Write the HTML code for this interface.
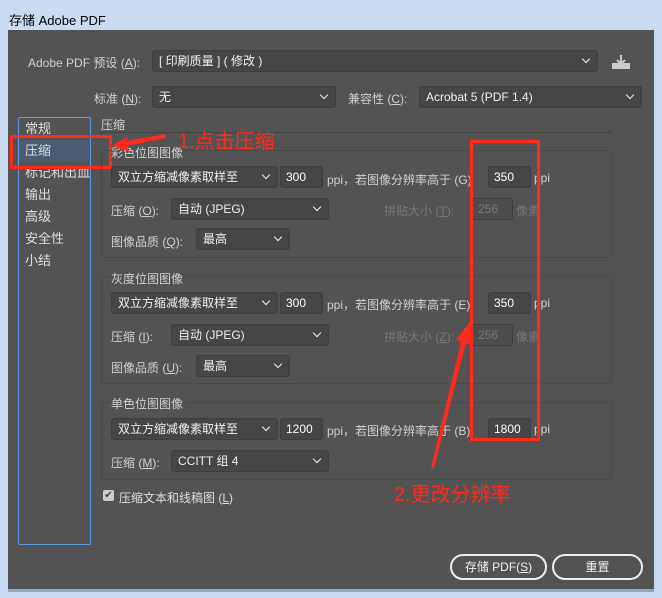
<!DOCTYPE html><html><head><meta charset="utf-8"><style>
*{margin:0;padding:0;box-sizing:border-box}
body{width:662px;height:598px;overflow:hidden;background:#c9dbf0;font-family:"Liberation Sans","Noto Sans CJK SC",sans-serif;font-size:12px;color:#dedede;position:relative}
.a{position:absolute;white-space:nowrap}
.dark{left:8px;top:30px;width:646px;height:560px;background:#535353}
.sel{position:absolute;background:#464646;border:1px solid #3e3e3e;border-radius:3px;color:#f0f0f0;padding-left:6px;line-height:20px}
.sel:after{content:"";position:absolute;right:8px;top:5px;width:5px;height:5px;border-right:1.5px solid #eee;border-bottom:1.5px solid #eee;transform:rotate(45deg)}
.inp{position:absolute;background:#464646;border:1px solid #3e3e3e;border-radius:3px;color:#fff;padding-left:5px;line-height:20px}
.grp{position:absolute;border:1px solid #4a4a4a;border-radius:3px}
.lbl{color:#d0d0d0}
.dis{color:#777}
.red{position:absolute;border:3px solid #ff2a1a}
.rt{color:#ff2a1a;font-size:20px}
.btn{position:absolute;border:2px solid #eee;border-radius:13px;text-align:center;line-height:22px;color:#eee}
</style></head><body>
<div class="a" style="left:9px;top:10px;color:#000;font-size:13px">存储 Adobe PDF</div>
<div class="a dark"></div>
<div class="a" style="left:8px;top:589px;width:646px;height:3px;background:#8ab"></div>
<div class="a lbl" style="left:28px;top:54px">Adobe PDF 预设 (<u>A</u>):</div>
<div class="sel" style="left:152px;top:50px;width:446px;height:22px">[ 印刷质量 ] ( 修改 )</div>
<svg class="a" style="left:612px;top:55px" width="18" height="14"><rect x="0" y="8" width="18" height="6" fill="#ccc"/><path d="M9 0v8M5 5l4 4 4-4" stroke="#ccc" stroke-width="2" fill="none"/></svg>
<div class="a lbl" style="left:94px;top:90px">标准 (<u>N</u>):</div>
<div class="sel" style="left:152px;top:86px;width:184px;height:22px">无</div>
<div class="a lbl" style="left:348px;top:90px">兼容性 (<u>C</u>):</div>
<div class="sel" style="left:419px;top:86px;width:223px;height:22px">Acrobat 5 (PDF 1.4)</div>
<div class="a" style="left:18px;top:117px;width:73px;height:428px;border:1px solid #5b9ae0;border-radius:2px"></div>
<div class="a" style="left:19px;top:140px;width:70px;height:22px;background:#4a5c74"></div>
<div class="a" style="left:25px;top:118px;line-height:22px;font-size:13px">常规<br>压缩<br>标记和出血<br>输出<br>高级<br>安全性<br>小结</div>
<div class="red" style="left:10px;top:135px;width:102px;height:34px"></div>
<div class="a lbl" style="left:101px;top:116px">压缩</div>
<div class="a" style="left:100px;top:132px;width:512px;height:1px;background:#444"></div>
<div class="grp" style="left:101px;top:150px;width:511px;height:108px"></div>
<div class="grp" style="left:101px;top:276px;width:511px;height:108px"></div>
<div class="grp" style="left:101px;top:402px;width:511px;height:78px"></div>
<div class="a lbl" style="left:111px;top:144px;background:#535353">彩色位图图像</div>
<div class="a lbl" style="left:111px;top:270px;background:#535353;padding-right:3px">灰度位图图像</div>
<div class="a lbl" style="left:111px;top:395px;background:#535353;padding-right:3px">单色位图图像</div>
<div class="sel" style="left:111px;top:166px;width:167px;height:22px">双立方缩减像素取样至</div>
<div class="inp" style="left:280px;top:166px;width:43px;height:22px">300</div>
<div class="a lbl" style="left:327px;top:171px">ppi，若图像分辨率高于 (G)</div>
<div class="inp" style="left:488px;top:166px;width:43px;height:22px">350</div>
<div class="a lbl" style="left:534px;top:171px">ppi</div>
<div class="a lbl" style="left:111px;top:202px">压缩 (<u>O</u>):</div>
<div class="sel" style="left:171px;top:198px;width:158px;height:22px">自动 (JPEG)</div>
<div class="a dis" style="left:384px;top:202px">拼贴大小 (<u>T</u>):</div>
<div class="inp dis" style="left:472px;top:198px;width:41px;height:22px;background:#4e4e4e">256</div>
<div class="a dis" style="left:516px;top:202px">像素</div>
<div class="a lbl" style="left:111px;top:233px">图像品质 (<u>Q</u>):</div>
<div class="sel" style="left:196px;top:228px;width:94px;height:22px">最高</div>
<div class="sel" style="left:111px;top:292px;width:167px;height:22px">双立方缩减像素取样至</div>
<div class="inp" style="left:280px;top:292px;width:43px;height:22px">300</div>
<div class="a lbl" style="left:327px;top:296px">ppi，若图像分辨率高于 (E)</div>
<div class="inp" style="left:488px;top:292px;width:43px;height:22px">350</div>
<div class="a lbl" style="left:534px;top:296px">ppi</div>
<div class="a lbl" style="left:111px;top:328px">压缩 (<u>I</u>):</div>
<div class="sel" style="left:171px;top:324px;width:158px;height:22px">自动 (JPEG)</div>
<div class="a dis" style="left:384px;top:328px">拼贴大小 (<u>Z</u>):</div>
<div class="inp dis" style="left:472px;top:324px;width:41px;height:22px;background:#4e4e4e">256</div>
<div class="a dis" style="left:516px;top:328px">像素</div>
<div class="a lbl" style="left:111px;top:359px">图像品质 (<u>U</u>):</div>
<div class="sel" style="left:196px;top:355px;width:94px;height:22px">最高</div>
<div class="sel" style="left:111px;top:418px;width:167px;height:22px">双立方缩减像素取样至</div>
<div class="inp" style="left:280px;top:418px;width:43px;height:22px">1200</div>
<div class="a lbl" style="left:327px;top:422px">ppi，若图像分辨率高于 (B)</div>
<div class="inp" style="left:488px;top:418px;width:43px;height:22px">1800</div>
<div class="a lbl" style="left:534px;top:422px">ppi</div>
<div class="a lbl" style="left:111px;top:454px">压缩 (<u>M</u>):</div>
<div class="sel" style="left:171px;top:450px;width:158px;height:22px">CCITT 组 4</div>
<div class="a" style="left:103px;top:490px;width:11px;height:11px;background:#ccc;border-radius:2px;color:#444;font-size:10px;line-height:11px;text-align:center">✔</div>
<div class="a" style="left:119px;top:489px">压缩文本和线稿图 (<u>L</u>)</div>
<div class="btn" style="left:450px;top:554px;width:97px;height:26px">存储 PDF(<u>S</u>)</div>
<div class="btn" style="left:552px;top:554px;width:91px;height:26px">重置</div>
<div class="red" style="left:470px;top:140px;width:70px;height:301px"></div>
<svg class="a" style="left:0;top:0" width="662" height="598"><polygon points="112,146 128,136 126,141 166,134 166,138 127,146 130,152" fill="#ff2a1a"/><polygon points="470,322 472,345 466,343 434,468 431,468 461,342 456,340" fill="#ff2a1a"/></svg>
<div class="a rt" style="left:178px;top:125px">1.点击压缩</div>
<div class="a rt" style="left:394px;top:478px">2.更改分辨率</div>
</body></html>
